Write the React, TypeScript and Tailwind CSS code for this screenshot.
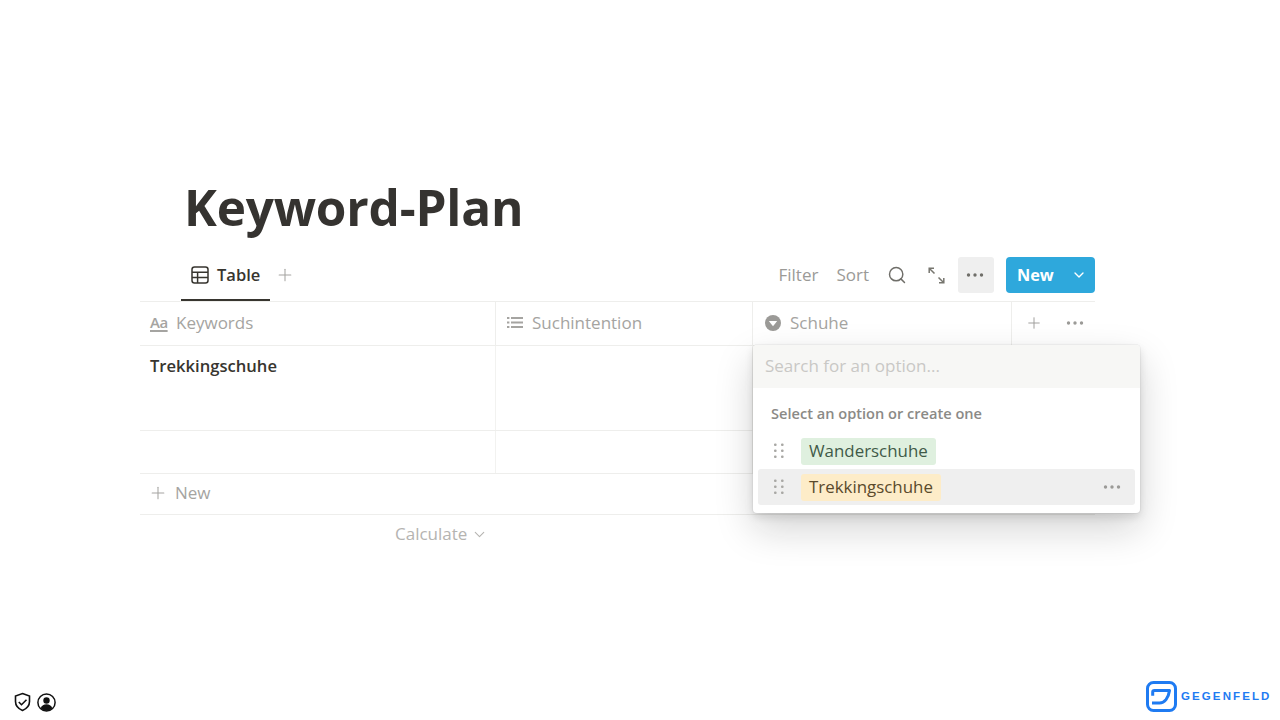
import React from 'react';
import { ChevronDown, Plus, Search } from 'lucide-react';

const font = "font-['Open_Sans','Noto_Sans',sans-serif]";

function Dots({ className }: { className?: string }) {
  return (
    <svg width="18" height="4" viewBox="0 0 18 4" className={className}>
      <circle cx="2.5" cy="2" r="1.7" fill="currentColor" />
      <circle cx="9" cy="2" r="1.7" fill="currentColor" />
      <circle cx="15.5" cy="2" r="1.7" fill="currentColor" />
    </svg>
  );
}

function TableIcon() {
  return (
    <svg width="18" height="18" viewBox="0 0 18 18" fill="none" stroke="#37352f" strokeWidth="1.5">
      <rect x="1" y="1" width="16" height="16" rx="2.5" />
      <path d="M1 6.2h16M1 11.6h16M6.6 6.2V17" />
    </svg>
  );
}

function ListIcon() {
  return (
    <svg width="16" height="13" viewBox="0 0 16 13" fill="#a5a4a1">
      <rect x="0" y="1" width="2.4" height="2" />
      <rect x="0" y="5.5" width="2.4" height="2" />
      <rect x="0" y="10" width="2.4" height="2" />
      <rect x="4" y="1" width="12" height="2" />
      <rect x="4" y="5.5" width="12" height="2" />
      <rect x="4" y="10" width="12" height="2" />
    </svg>
  );
}

function SelectIcon() {
  return (
    <svg width="16" height="16" viewBox="0 0 16 16">
      <circle cx="8" cy="8" r="8" fill="#9b9a97" />
      <path d="M3.8 6h8.4L8 11.2z" fill="#fff" />
    </svg>
  );
}

function ExpandIcon() {
  return (
    <svg width="17" height="17" viewBox="0 0 17 17" fill="none" stroke="#77766f" strokeWidth="1.5">
      <path d="M1.2 6V1.200H6M1.200 1.200l5.300 5.300M15.800 11v4.800H11M15.800 15.800l-5.300-5.300" />
    </svg>
  );
}

function Grip() {
  return (
    <svg width="10" height="16" viewBox="0 0 10 16" fill="#a9a8a5">
      <rect x="0" y="0.5" width="2.6" height="2.6" rx="1" />
      <rect x="7" y="0.5" width="2.6" height="2.6" rx="1" />
      <rect x="0" y="6.5" width="2.6" height="2.6" rx="1" />
      <rect x="7" y="6.5" width="2.6" height="2.6" rx="1" />
      <rect x="0" y="12.5" width="2.6" height="2.6" rx="1" />
      <rect x="7" y="12.5" width="2.6" height="2.6" rx="1" />
    </svg>
  );
}

function Popover() {
  return (
    <div className="absolute left-[753px] top-[345px] w-[387px] h-[168px] bg-white rounded-[4px] shadow-[0_0_0_1px_rgba(15,15,15,0.04),0_4px_8px_rgba(15,15,15,0.12),0_16px_38px_rgba(15,15,15,0.18)]">
      <div className="h-[43px] bg-[#f7f7f5] rounded-t-[4px] flex items-center px-3 pb-[2px] text-[17px] text-[#c9c8c5]">
        Search for an option...
      </div>
      <div className="pl-[18px] mt-[16px] h-[20px] flex items-center text-[14.6px] font-semibold text-[#8b8a86]">
        Select an option or create one
      </div>
      <div className="mt-[9px] h-[36px] flex items-center pl-[21px]">
        <Grip />
        <span className="ml-[17px] h-[27px] px-2 flex items-center rounded-[3px] bg-[#dff0df] text-[16.9px] text-[#3f5a48]">Wanderschuhe</span>
      </div>
      <div className="mx-[5px] h-[36px] flex items-center pl-[16px] pr-[14px] rounded-[3px] bg-[#efefef]">
        <Grip />
        <span className="ml-[17px] h-[27px] px-2 flex items-center rounded-[3px] bg-[#fdecc8] text-[16.9px] text-[#5a4a2c]">Trekkingschuhe</span>
        <Dots className="ml-auto text-[#9b9a97]" />
      </div>
    </div>
  );
}

export default function App() {
  return (
    <div className={`relative h-screen w-[1280px] overflow-hidden bg-white ${font}`}>
      <div className="pt-[176px] pl-[140px] w-[1095px]">
        <h1 className="pl-[44px] h-[64px] flex items-center text-[49.5px] font-bold text-[#353330] leading-none tracking-[-0.2px]">Keyword-Plan</h1>

        <div className="mt-[17px] h-[44px] flex items-start">
          <div className="ml-[41px] w-[89px] h-[44px] border-b-2 border-[#37352f] flex items-center pl-[10px] pb-[6px] gap-[8px]">
            <TableIcon />
            <span className="text-[16.500px] font-semibold text-[#37352f]">Table</span>
          </div>
          <Plus size={20} strokeWidth={1.25} className="ml-[5px] mt-[8px] text-[#a5a4a1]" />
          <div className="ml-auto h-[36px] flex items-center text-[17px] text-[#9b9a97]">
            <span>Filter</span>
            <span className="ml-[18px]">Sort</span>
            <Search size={20} strokeWidth={1.75} className="ml-[18px] text-[#6f6e69]" />
            <span className="ml-[21px]"><ExpandIcon /></span>
            <div className="ml-[13px] w-[36px] h-[36px] rounded-[3px] bg-[#efefef] flex items-center justify-center pr-[2px] text-[#6f6e69]">
              <Dots />
            </div>
            <div className="ml-[12px] w-[89px] h-[36px] rounded-[4px] bg-[#2ea8dc] flex items-center text-white">
              <span className="pl-[11px] w-[60px] font-bold text-[16.300px]">New</span>
              <ChevronDown size={16} strokeWidth={2} className="ml-[5px]" />
            </div>
          </div>
        </div>

        <div className="border-t border-b border-[#eeeeec] h-[45px] flex text-[17px] text-[#a5a4a1]">
          <div className="w-[356px] shrink-0 border-r border-[#eeeeec] flex items-center pl-[10px] pb-[2px] gap-[7px]">
            <span className="w-[19px] text-[15px] leading-[15px] mb-[1px] underline underline-offset-2 decoration-[1.5px] font-semibold tracking-[-0.5px]">Aa</span>
            <span>Keywords</span>
          </div>
          <div className="w-[257px] shrink-0 border-r border-[#eeeeec] flex items-center pl-[11px] pb-[2px] gap-[9px]">
            <ListIcon />
            <span>Suchintention</span>
          </div>
          <div className="w-[259px] shrink-0 border-r border-[#eeeeec] flex items-center pl-[12px] pb-[2px] gap-[9px]">
            <SelectIcon />
            <span>Schuhe</span>
          </div>
          <div className="flex items-center pl-[13px] pb-[2px] text-[#9b9a97]">
            <Plus size={18} strokeWidth={1.25} />
            <Dots className="ml-[23px]" />
          </div>
        </div>

        <div className="h-[85px] border-b border-[#eeeeec] flex">
          <div className="w-[356px] shrink-0 border-r border-[#f2f2f0] pl-[10px] pt-[8px] text-[16.600px] font-semibold text-[#37352f]">Trekkingschuhe</div>
          <div className="w-[257px] shrink-0 border-r border-[#f2f2f0]" />
        </div>
        <div className="h-[43px] border-b border-[#eeeeec] flex">
          <div className="w-[356px] shrink-0 border-r border-[#f2f2f0]" />
          <div className="w-[257px] shrink-0 border-r border-[#f2f2f0]" />
        </div>
        <div className="h-[41px] border-b border-[#eeeeec] flex items-center pl-[8px] pb-[2px] text-[17px] text-[#a5a4a1] gap-[7px]">
          <Plus size={20} strokeWidth={1.25} />
          <span>New</span>
        </div>
        <div className="h-[40px] pl-[255px] pb-[2px] flex items-center text-[17px] text-[#b5b4b1] gap-[4px]">
          <span>Calculate</span>
          <ChevronDown size={17} strokeWidth={1.5} />
        </div>
      </div>

      <Popover />

      <div className="absolute left-[13px] bottom-[8px] flex items-center gap-[5px]">
        <svg width="19" height="20" viewBox="0 0 19 20" fill="none" stroke="#111" strokeWidth="1.6">
          <path d="M9.5 1.5l7 2.5v5.5c0 4.2-2.9 7.2-7 9-4.100-1.800-7-4.800-7-9V4z" />
          <path d="M5.800 10l2.700 2.700 5-5" />
        </svg>
        <svg width="19" height="19" viewBox="0 0 19 19">
          <circle cx="9.500" cy="9.500" r="8.600" fill="none" stroke="#111" strokeWidth="1.5" />
          <circle cx="9.500" cy="7.500" r="3.200" fill="#111" />
          <path d="M3.600 15.200c1-2.800 3.200-4 5.900-4s4.900 1.200 5.900 4c-1.600 1.600-3.600 2.500-5.900 2.500s-4.300-.9-5.900-2.500z" fill="#111" />
        </svg>
      </div>

      <div className="absolute left-[1146px] top-[681px] flex items-center gap-[4px]">
        <svg width="31" height="31" viewBox="0 0 31 31" fill="none" stroke="#1f7bf2" strokeWidth="3">
          <rect x="1.500" y="1.500" width="28" height="28" rx="6" />
          <path d="M6 22h7.500c5 0 9-5 10-12.500H8.500c-1 0-1.800.8-1.800 1.800v3.500" strokeLinejoin="round" />
        </svg>
        <span className="text-[11.500px] font-bold text-[#1f7bf2] tracking-[2.1px] font-['Liberation_Sans',sans-serif]">GEGENFELD</span>
      </div>
    </div>
  );
}
